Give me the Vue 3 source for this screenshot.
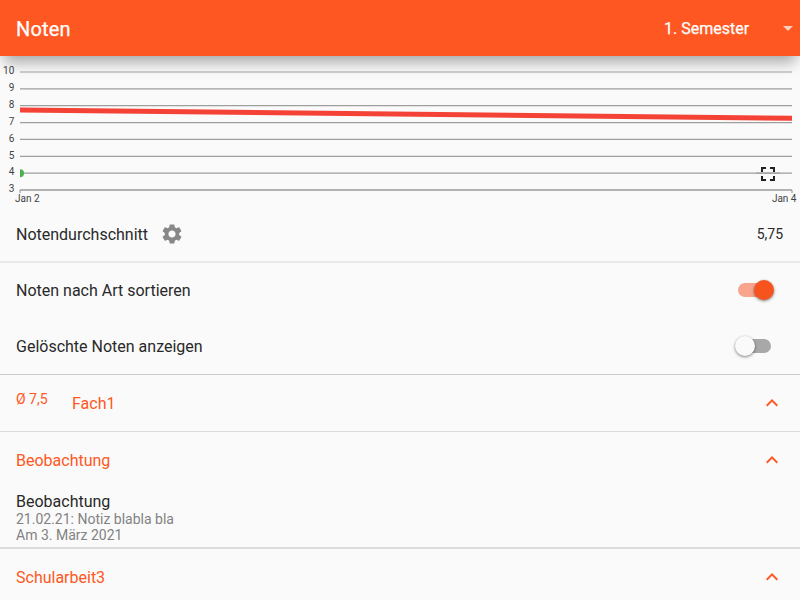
<script setup>
import { ref } from 'vue'

const top = 16
const step = 118 / 7
const grades = [10, 9, 8, 7, 6, 5, 4, 3]
const yOf = (grade) => top + (10 - grade) * step
const sortByType = ref(true)
const showDeleted = ref(false)
</script>

<template>
  <div class="page">
    <header class="bar">
      <h1>Noten</h1>
      <div class="semester">
        <span>1. Semester</span>
        <svg width="24" height="24" viewBox="0 0 24 24"><path d="M7 10l5 5 5-5z" /></svg>
      </div>
    </header>

    <section class="chart">
      <svg width="800" height="150" viewBox="0 0 800 150">
        <defs>
          <clipPath id="plot"><rect x="20" y="0" width="772" height="140" /></clipPath>
        </defs>
        <g v-for="g in grades" :key="g">
          <line v-if="g > 3" class="grid" x1="20" x2="792" :y1="yOf(g)" :y2="yOf(g)" />
          <text class="tick" x="14.3" :y="Math.round(yOf(g) + 2.25)" text-anchor="end">{{ g }}</text>
        </g>
        <path class="expand" transform="translate(756 106)" d="M7 14H5v5h5v-2H7v-3zm-2-4h2V7h3V5H5v5zm12 7h-3v2h5v-5h-2v3zM14 5v2h3v3h2V5h-5z" />
        <line class="grid" x1="756" x2="780" :y1="yOf(4)" :y2="yOf(4)" />
        <path class="axis" d="M20 134H792" />
        <path class="axis-tick" d="M20 134V137M792 134V137" />
        <g clip-path="url(#plot)">
          <line class="average" x1="20" :y1="yOf(7.75)" x2="792" :y2="yOf(7.25)" />
          <circle class="point" cx="20" :cy="yOf(4)" r="4" />
        </g>
        <text class="tick" x="15" y="146">Jan 2</text>
        <text class="tick" x="796.5" y="146" text-anchor="end">Jan 4</text>
      </svg>
    </section>

    <div class="row average-row">
      <span class="label">Notendurchschnitt</span>
      <svg class="gear" width="24" height="24" viewBox="0 0 24 24">
        <path d="M19.14 12.94c.04-.3.06-.61.06-.94 0-.32-.02-.64-.07-.94l2.03-1.58c.18-.14.23-.41.12-.61l-1.92-3.32c-.12-.22-.37-.29-.59-.22l-2.39.96c-.5-.38-1.03-.7-1.62-.94l-.36-2.54c-.04-.24-.24-.41-.48-.41h-3.84c-.24 0-.43.17-.47.41l-.36 2.54c-.59.24-1.13.57-1.62.94l-2.39-.96c-.22-.08-.47 0-.59.22L2.74 8.87c-.12.21-.08.47.12.61l2.03 1.58c-.05.3-.09.63-.09.94s.02.64.07.94l-2.03 1.58c-.18.14-.23.41-.12.61l1.92 3.32c.12.22.37.29.59.22l2.39-.96c.5.38 1.03.7 1.62.94l.36 2.54c.05.24.24.41.48.41h3.84c.24 0 .44-.17.47-.41l.36-2.54c.59-.24 1.13-.56 1.62-.94l2.39.96c.22.08.47 0 .59-.22l1.92-3.32c.12-.22.07-.47-.12-.61l-2.01-1.58zM12 15.6c-1.98 0-3.6-1.62-3.6-3.6s1.62-3.6 3.6-3.6 3.6 1.62 3.6 3.6-1.62 3.6-3.6 3.6z" />
      </svg>
      <span class="value">5,75</span>
    </div>

    <div class="row toggle-row first">
      <span>Noten nach Art sortieren</span>
      <button class="switch" :class="{ on: sortByType }" @click="sortByType = !sortByType"><i></i></button>
    </div>
    <div class="row toggle-row">
      <span>Gelöschte Noten anzeigen</span>
      <button class="switch" :class="{ on: showDeleted }" @click="showDeleted = !showDeleted"><i></i></button>
    </div>

    <div class="row subject">
      <span class="mean">Ø 7,5</span>
      <span>Fach1</span>
      <svg class="chevron" width="24" height="24" viewBox="0 0 24 24"><path d="M12 8l-6 6 1.41 1.41L12 10.83l4.59 4.58L18 14z" /></svg>
    </div>
    <div class="row group">
      <span>Beobachtung</span>
      <svg class="chevron" width="24" height="24" viewBox="0 0 24 24"><path d="M12 8l-6 6 1.41 1.41L12 10.83l4.59 4.58L18 14z" /></svg>
    </div>
    <div class="entry">
      <div class="entry-title">Beobachtung</div>
      <div class="entry-note">21.02.21: Notiz blabla bla</div>
      <div class="entry-note">Am 3. März 2021</div>
    </div>
    <div class="row group next">
      <span>Schularbeit3</span>
      <svg class="chevron" width="24" height="24" viewBox="0 0 24 24"><path d="M12 8l-6 6 1.41 1.41L12 10.83l4.59 4.58L18 14z" /></svg>
    </div>
  </div>
</template>

<style>
body {
  margin: 0;
  overflow: hidden;
}
</style>

<style scoped>
.page {
  width: 800px;
  height: 600px;
  overflow: hidden;
  background: #fafafa;
  color: #292929;
  font-family: Roboto, sans-serif;
  font-size: 16px;
}
.bar {
  height: 56px;
  box-sizing: border-box;
  padding-left: 16px;
  display: flex;
  align-items: center;
  justify-content: space-between;
  background: #ff5722;
  color: #fff;
  box-shadow: 0 10px 14px -4px rgba(0, 0, 0, 0.34);
}
h1 {
  margin: 0;
  padding-top: 2px;
  font-size: 20px;
  font-weight: 400;
  letter-spacing: 0.15px;
  -webkit-text-stroke: 0.25px #fff;
}
.semester {
  display: flex;
  align-items: center;
  width: 136px;
  justify-content: space-between;
  font-weight: 400;
  -webkit-text-stroke: 0.25px #fff;
}
.semester svg {
  flex: none;
  fill: rgba(255, 255, 255, 0.7);
}
.chart {
  height: 150px;
}
.chart svg {
  display: block;
}
.grid {
  stroke: #9e9e9e;
  stroke-width: 1.2;
}
.axis {
  stroke: #b2b2b2;
  stroke-width: 2;
}
.axis-tick {
  stroke: #9e9e9e;
  stroke-width: 1.2;
}
.tick {
  font-size: 10px;
  fill: #424242;
}
.average {
  stroke: #f44336;
  stroke-width: 5;
}
.point {
  fill: #4caf50;
}
.expand {
  fill: #212121;
}
.row {
  display: flex;
  align-items: center;
  box-sizing: border-box;
  height: 56px;
  padding: 0 16px;
}
.average-row {
  height: 55px;
}
.label {
  padding-top: 2px;
}
.gear {
  margin-left: 12px;
  fill: #888;
}
.value {
  margin-left: auto;
  margin-right: 1px;
  font-size: 14px;
}
.toggle-row {
  justify-content: space-between;
  padding-right: 29px;
}
.toggle-row.first {
  height: 57px;
  padding-bottom: 1px;
  border-top: 2px solid #e9e9e9;
}
.switch {
  width: 33px;
  height: 14px;
  padding: 0;
  border: 0;
  border-radius: 7px;
  background: #a8a8a8;
  display: flex;
  align-items: center;
}
.switch i {
  flex: none;
  width: 20px;
  height: 20px;
  margin-left: -3px;
  border-radius: 50%;
  background: #fafafa;
  box-shadow: 0 1px 3px rgba(0, 0, 0, 0.5);
}
.switch.on {
  background: #f9a58d;
  justify-content: flex-end;
}
.switch.on i {
  margin-right: -3px;
  background: #f7531f;
}
.subject,
.group {
  color: #ff5722;
}
.subject {
  height: 57px;
  border-top: 1px solid #ccc;
}
.mean {
  width: 56px;
  font-size: 14px;
  padding-bottom: 8px;
}
.group {
  height: 57px;
  border-top: 1px solid #dcdcdc;
}
.chevron {
  margin-left: auto;
  fill: #ff5722;
}
.entry {
  box-sizing: border-box;
  height: 59px;
  padding: 4px 16px 0;
}
.entry-title {
  height: 19px;
  line-height: 19px;
}
.entry-note {
  height: 16px;
  line-height: 16px;
  font-size: 14px;
  color: #828282;
}
.next {
  height: 58px;
  border-top: 2px solid #dcdcdc;
}
</style>
